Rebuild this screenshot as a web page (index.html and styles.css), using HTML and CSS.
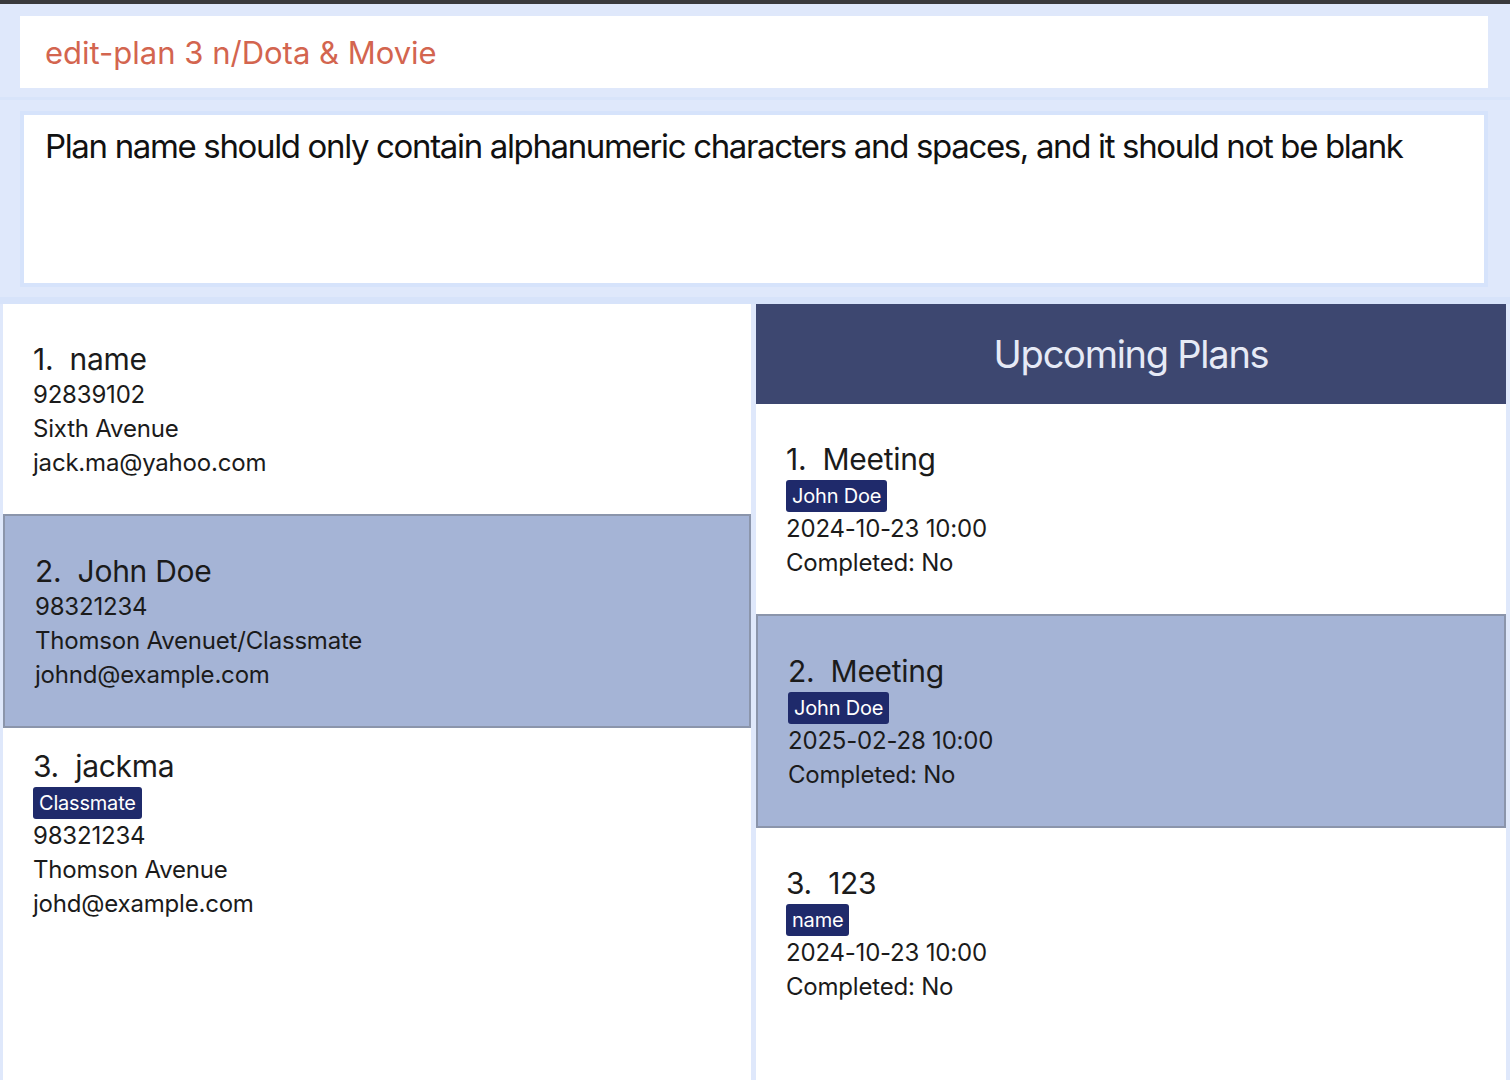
FILE: index.html
```html
<!DOCTYPE html>
<html>
<head>
<meta charset="utf-8">
<link rel="stylesheet" href="styles.css">
</head>
<body>
<div class="topbar"></div>
<div class="command-section">
  <div class="command-box">edit-plan 3 n/Dota &amp; Movie</div>
</div>
<div class="sep"></div>
<div class="result-section">
  <div class="result-box">Plan name should only contain alphanumeric characters and spaces, and it should not be blank</div>
</div>
<div class="band"></div>
<div class="lists">
  <div class="panel persons">
    <div class="card">
      <div class="title">1.&nbsp;&nbsp;name</div>
      <div class="line">92839102</div>
      <div class="line">Sixth Avenue</div>
      <div class="line">jack.ma@yahoo.com</div>
    </div>
    <div class="card selected">
      <div class="title">2.&nbsp;&nbsp;John Doe</div>
      <div class="line">98321234</div>
      <div class="line">Thomson Avenuet/Classmate</div>
      <div class="line">johnd@example.com</div>
    </div>
    <div class="card">
      <div class="title">3.&nbsp;&nbsp;jackma</div>
      <div class="tags"><span class="tag">Classmate</span></div>
      <div class="line">98321234</div>
      <div class="line">Thomson Avenue</div>
      <div class="line">johd@example.com</div>
    </div>
  </div>
  <div class="panel plans">
    <div class="plans-header">Upcoming Plans</div>
    <div class="card">
      <div class="title">1.&nbsp;&nbsp;Meeting</div>
      <div class="tags"><span class="tag">John Doe</span></div>
      <div class="line">2024-10-23 10:00</div>
      <div class="line">Completed: No</div>
    </div>
    <div class="card selected">
      <div class="title">2.&nbsp;&nbsp;Meeting</div>
      <div class="tags"><span class="tag">John Doe</span></div>
      <div class="line">2025-02-28 10:00</div>
      <div class="line">Completed: No</div>
    </div>
    <div class="card">
      <div class="title">3.&nbsp;&nbsp;123</div>
      <div class="tags"><span class="tag">name</span></div>
      <div class="line">2024-10-23 10:00</div>
      <div class="line">Completed: No</div>
    </div>
  </div>
</div>
</body>
</html>
```
FILE: styles.css
```css
html, body {
  margin: 0;
  padding: 0;
}
body {
  background: #dfe8fb;
  font-family: Inter, "Noto Sans", "Liberation Sans", sans-serif;
  color: #1b1b1b;
  min-height: 100vh;
  display: flex;
  flex-direction: column;
  overflow: hidden;
}
.topbar {
  height: 4px;
  background: #3a3a3c;
}
.command-section {
  padding: 12px 22px 9px 20px;
}
.command-box {
  height: 72px;
  background: #ffffff;
  display: flex;
  align-items: center;
  padding-left: 25px;
  font-size: 31px;
  color: #d3654f;
  letter-spacing: 0;
}
.sep {
  height: 3px;
  background: #d8e4fa;
}
.result-section {
  padding: 11px 22px 10px 20px;
}
.result-box {
  height: 157px;
  background: #ffffff;
  border: 4px solid #d6e3fb;
  padding: 11px 21px 0;
  box-sizing: content-box;
  font-size: 33px;
  letter-spacing: -1.35px;
  color: #111111;
}
.band {
  height: 7px;
  background: #d7e3fa;
}
.lists {
  flex: 1;
  display: flex;
  gap: 5px;
  padding: 0 4px 0 3px;
}
.panel {
  background: #ffffff;
  display: flex;
  flex-direction: column;
}
.persons {
  width: 748px;
}
.plans {
  width: 750px;
}
.plans-header {
  height: 100px;
  background: #3d4770;
  color: #e6eaf6;
  font-size: 38px;
  display: flex;
  align-items: center;
  justify-content: center;
  letter-spacing: -1.25px;
}
.card {
  height: 210px;
  padding: 0 30px;
  display: flex;
  flex-direction: column;
  justify-content: center;
}
.card.selected {
  background: #a5b4d6;
  border: 2px solid #8b95ab;
}
.title {
  font-size: 30px;
  line-height: 36px;
  letter-spacing: -0.3px;
  margin-top: 2px;
  margin-bottom: 1px;
}
.line {
  font-size: 24px;
  line-height: 34px;
  letter-spacing: -0.2px;
}
.tags {
  display: flex;
  margin-top: 2px;
}
.tag {
  background: #1f2a6b;
  color: #ffffff;
  font-size: 20px;
  height: 32px;
  line-height: 32px;
  padding: 0 6px;
  border-radius: 3px;
  letter-spacing: -0.2px;
}
```
